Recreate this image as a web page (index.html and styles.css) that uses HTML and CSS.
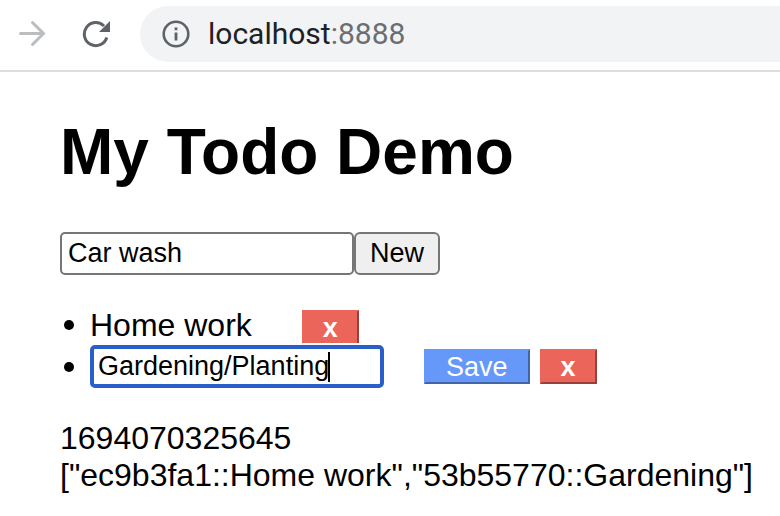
FILE: index.html
```html
<!DOCTYPE html>
<html lang="en">
<head>
<meta charset="utf-8">
<title>My Todo Demo</title>
<link rel="stylesheet" href="styles.css">
</head>
<body>
<header class="toolbar">
  <button class="nav forward" type="button" aria-label="Forward" disabled>
    <svg width="28" height="28" viewBox="0 0 28 28" fill="none" stroke="currentColor" stroke-width="3" stroke-linecap="round"><path d="M2.5 13.5H25M14.5 2.5L25.5 13.5L14.5 24.5"/></svg>
  </button>
  <button class="nav" type="button" aria-label="Reload">
    <svg width="28" height="28" viewBox="0 0 28 28"><path d="M24.8 17.5A11.5 11.5 0 1 1 22 6" fill="none" stroke="currentColor" stroke-width="3"/><path d="M28 1V12H17Z" fill="currentColor"/></svg>
  </button>
  <div class="address">
    <svg class="info" width="28" height="28" viewBox="0 0 28 28"><circle cx="14" cy="14" r="12.3" fill="none" stroke="currentColor" stroke-width="2.6"/><path d="M12.6 12.5h2.8v8h-2.8zM12.6 7.5h2.8v2.8h-2.8z" fill="currentColor"/></svg>
    <span class="url">localhost<span class="port">:8888</span></span>
  </div>
</header>
<main class="page">
  <h1 class="title">My Todo Demo</h1>
  <form class="new-todo">
    <input class="field" type="text" value="Car wash" aria-label="New todo">
    <button class="add" type="button">New</button>
  </form>
  <ul class="todos">
    <li class="todo"><span class="name">Home work</span><button class="action remove" type="button">x</button></li>
    <li class="todo editing"><input class="field active" type="text" value="Gardening/Planting" aria-label="Edit todo"><span class="caret"></span><button class="action save" type="button">Save</button><button class="action remove" type="button">x</button></li>
  </ul>
  <div class="output">1694070325645</div>
  <div class="output">["ec9b3fa1::Home work","53b55770::Gardening"]</div>
</main>
</body>
</html>
```
FILE: styles.css
```css
* { box-sizing: border-box; }
body { margin: 0; background: #fff; color: #000; font-family: "Liberation Sans", Arial, sans-serif; font-size: 32px; line-height: 37px; overflow: hidden; }
button, input { font-family: inherit; font-size: 27px; line-height: 30px; }
.toolbar { display: flex; align-items: center; height: 72px; padding: 0 0 2px 18px; border-bottom: 2px solid #dcdddf; }
.nav { display: flex; flex: none; padding: 0; margin-right: 36px; border: 0; background: none; color: #5f6368; }
.forward { color: #bbbdbf; }
.nav + .address { margin-left: -6px; }
.address { display: flex; flex: 1; align-items: center; height: 56px; padding-left: 22px; border-radius: 28px 0 0 28px; background: #f1f3f4; }
.info { flex: none; color: #5f6368; }
.url { margin-left: 18px; font-family: Roboto, sans-serif; font-size: 30px; line-height: 34px; color: #202124; }
.port { color: #6b6d70; }
.page { padding: 43px 0 0 60px; }
.title { margin: 0; font-size: 64px; line-height: 74px; }
.new-todo { display: flex; margin-top: 43px; }
.field { width: 294px; height: 43px; padding: 2px 6px; border: 2px solid #767676; border-radius: 5px; background: #fff; color: #000; outline: 0; }
.add { height: 43px; padding: 0 14px 2px; border: 2px solid #767676; border-radius: 6px; background: #efefef; color: #000; }
.todos { margin: 32px 0; padding: 0; list-style: none; }
.todo { display: flex; align-items: center; height: 38px; padding-bottom: 2px; }
.todo::before { content: ""; flex: none; width: 10px; height: 10px; margin: 0 16px 0 4px; border-radius: 50%; background: #000; }
.name { margin-right: 50px; }
.action { height: 35px; padding: 0 20px; border: 2px outset; color: #fff; line-height: 28px; }
.remove { padding: 0 19px; background: #ec655b; border-color: #ec655b; font-weight: bold; }
.name + .remove { align-self: flex-end; height: 33px; border-bottom: 0; }
.save { margin: 0 10px 0 40px; background: #6698f9; border-color: #6698f9; }
.action { border-top-color: transparent; border-left-color: transparent; background-clip: border-box; }
.editing { position: relative; height: 43px; padding: 0; }
.active { border: 4px solid #2a5fc9; padding: 0 4px; }
.caret { position: absolute; left: 268px; width: 2px; height: 30px; background: #000; }
.output { white-space: nowrap; }
```
